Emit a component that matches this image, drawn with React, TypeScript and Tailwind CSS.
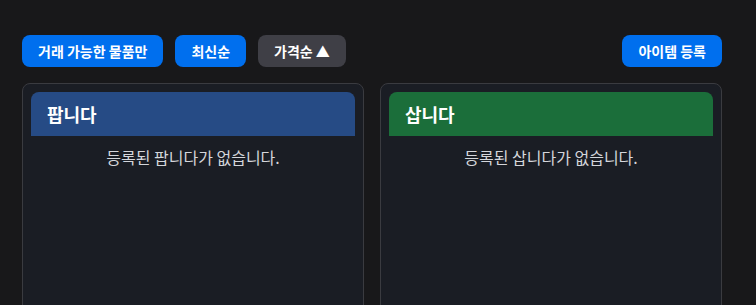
const font = { fontFamily: '"Noto Sans CJK KR", "Noto Sans", sans-serif' };

function Panel({ title, color }: { title: string; color: string }) {
  return (
    <div className="flex-1 rounded-lg border border-[#3a3b40] bg-[#1a1d24] p-2 min-h-[300px]">
      <div className={`${color} rounded-t-lg px-4 py-3`}>
        <h2 className="text-lg font-bold leading-5 text-white">{title}</h2>
      </div>
      <p className="py-[11px] text-center text-base leading-5 text-[#d4d6db]">등록된 {title}가 없습니다.</p>
    </div>
  );
}

export default function App() {
  return (
    <div className="min-h-screen bg-[#18181a] pt-[35px] pl-[22px]" style={font}>
      <div className="w-[700px]">
        <div className="flex items-center justify-between mb-4">
          <div className="flex gap-3">
            <button className="h-8 rounded-lg bg-[#006fee] px-4 text-sm font-bold text-white">거래 가능한 물품만</button>
            <button className="h-8 rounded-lg bg-[#006fee] px-4 text-sm font-bold text-white">최신순</button>
            <button className="h-8 rounded-lg bg-[#3f3f46] px-4 text-sm font-bold text-white">가격순 ▲</button>
          </div>
          <button className="h-8 rounded-lg bg-[#006fee] px-4 text-sm font-bold text-white">아이템 등록</button>
        </div>
        <div className="flex gap-4">
          <Panel title="팝니다" color="bg-[#264b85]" />
          <Panel title="삽니다" color="bg-[#1b6e3a]" />
        </div>
      </div>
    </div>
  );
}
